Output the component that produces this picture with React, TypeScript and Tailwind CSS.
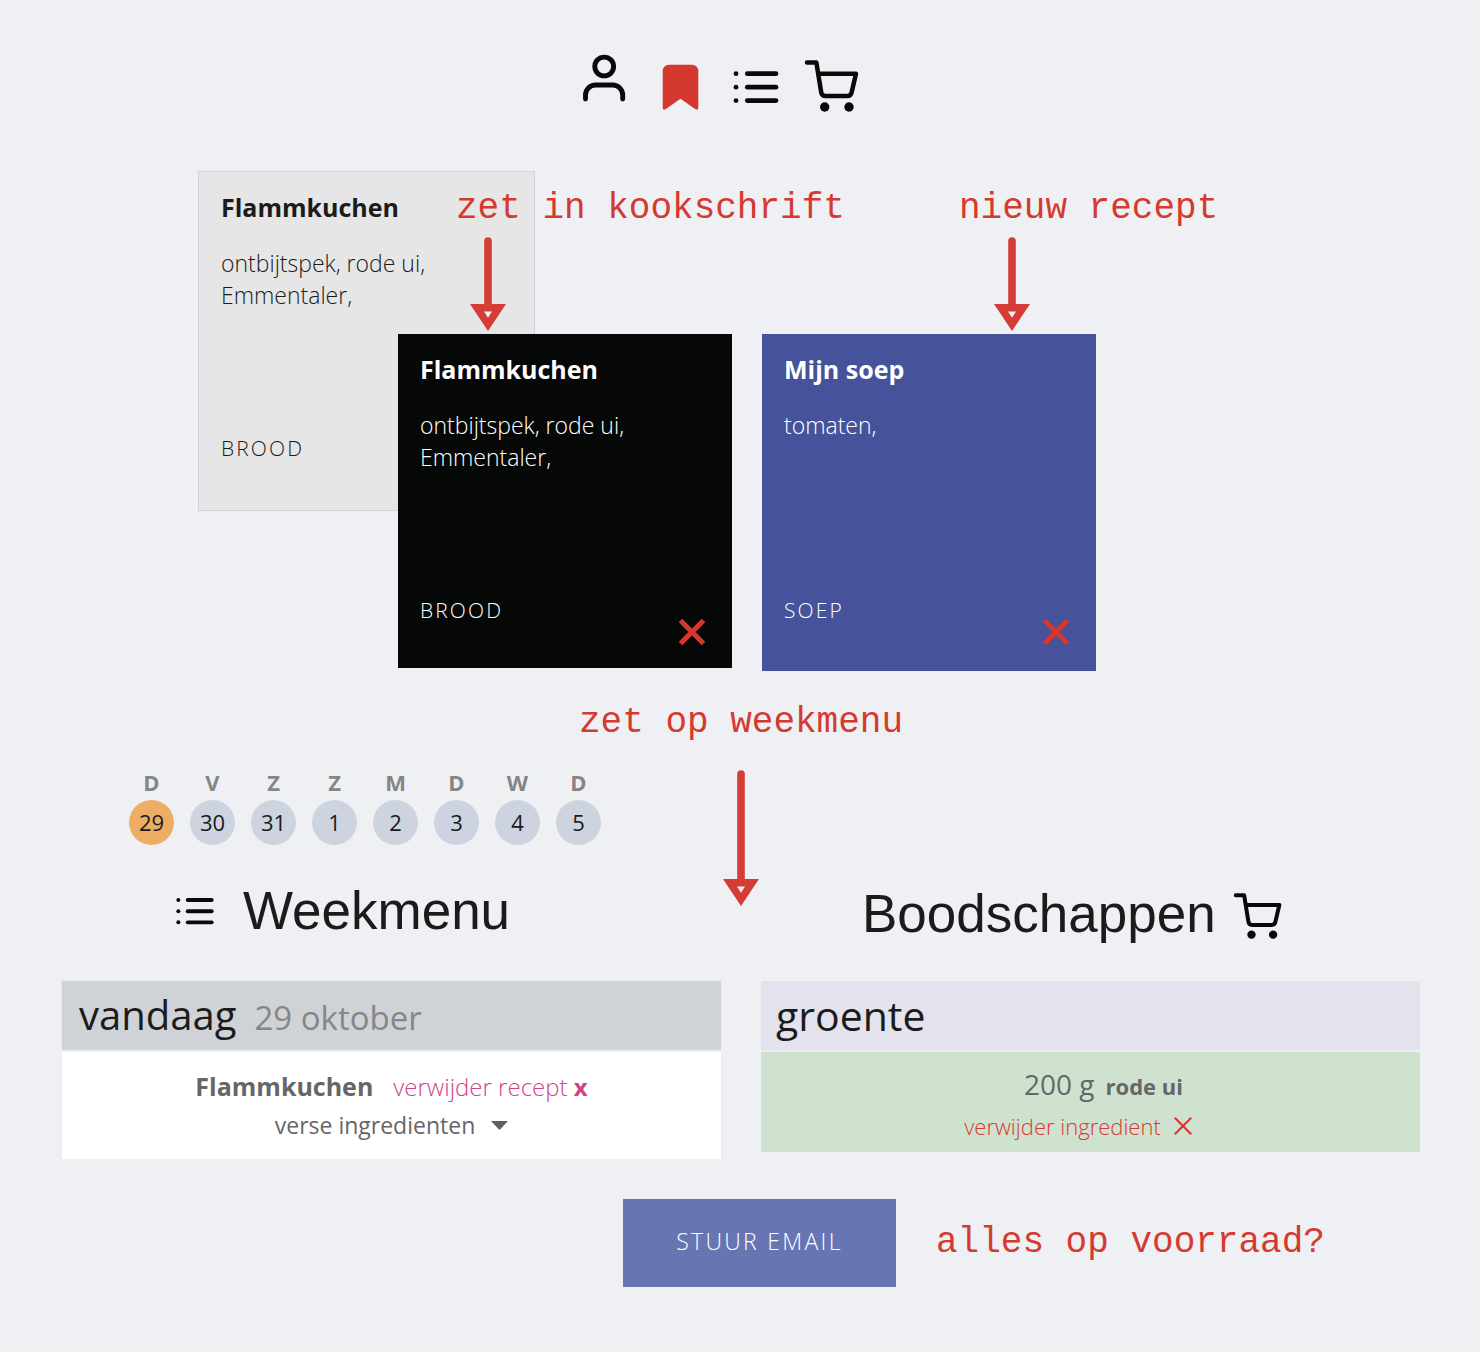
import React from "react";

const LIGHT = "#f0f0f4";

function UserIcon() {
  return (
    <svg viewBox="0 0 56 64" className="h-16 w-14" fill="none" stroke="#080a09" strokeWidth="4.9" strokeLinecap="round" aria-hidden="true">
      <circle cx="28.2" cy="12.5" r="9.4" />
      <path d="M9.5 45V41a10 10 0 0 1 10-10h17.2a10 10 0 0 1 10 10v4" />
    </svg>
  );
}

function BookmarkIcon() {
  return (
    <svg viewBox="0 0 56 64" className="h-16 w-14" fill="#d4382f" aria-hidden="true">
      <path d="M17 10.7h23a6.3 6.3 0 0 1 6.3 6.3v36.6q0 3-2.8 1.6L28.5 44.7 13.5 55.2q-2.8 1.4-2.8-1.6V17a6.3 6.3 0 0 1 6.3-6.3Z" />
    </svg>
  );
}

function ListIcon({ className }: { className: string }) {
  return (
    <svg viewBox="4 15 48 36" className={className} fill="none" stroke="#080a09" strokeWidth="4.7" strokeLinecap="round" aria-hidden="true">
      {[19.7, 33.2, 46.6].map((y) => (
        <React.Fragment key={y}>
          <path d={`M19.3 ${y}H48`} />
          <circle cx="8" cy={y} r="2.4" fill="#080a09" stroke="none" />
        </React.Fragment>
      ))}
    </svg>
  );
}

function CartIcon({ className }: { className: string }) {
  return (
    <svg viewBox="0 5 56 54" className={className} fill="none" stroke="#080a09" strokeWidth="4.5" strokeLinecap="round" strokeLinejoin="round" aria-hidden="true">
      <path d="M3 8.6h9.4l4.8 29.8q.6 3.6 4.2 3.6h22q3.6 0 4.2-3.6L52 19.7H14.5" />
      <circle cx="20.7" cy="53" r="4.7" fill="#080a09" stroke="none" />
      <circle cx="45" cy="53" r="4.7" fill="#080a09" stroke="none" />
    </svg>
  );
}

function Arrow({ length, className = "" }: { length: number; className?: string }) {
  return (
    <svg width="36" height={length} viewBox={`0 0 36 ${length}`} className={className} aria-hidden="true">
      <path d={`M18 4V${length - 24}`} stroke="#d43c35" strokeWidth="7.6" strokeLinecap="round" />
      <path d={`M0 ${length - 27}H36L18 ${length}Z`} fill="#d43c35" />
      <path d={`M14 ${length - 19.5}h8l-4 6.2Z`} fill={LIGHT} />
    </svg>
  );
}

function Cross({ className, width }: { className: string; width: number }) {
  return (
    <svg viewBox="0 0 28 28" className={className} stroke="#d8372c" strokeWidth={width} aria-hidden="true">
      <path d="M2.5 2.5l23 23M25.5 2.5l-23 23" />
    </svg>
  );
}

type CardProps = { title: string; items: string[]; kind: string; className: string; removable?: boolean };

function RecipeCard({ title, items, kind, className, removable }: CardProps) {
  return (
    <article className={`flex flex-col px-[22px] pt-[19px] ${className}`}>
      <h2 className="text-[25px] leading-8 font-bold">{title}</h2>
      <p className="mt-6 text-[23px] leading-8 font-light">
        {items.map((line) => (
          <span key={line} className="block">{line}</span>
        ))}
      </p>
      <div className="mt-auto flex items-end justify-between">
        <span className="pb-5 text-[21px] leading-8 font-light tracking-widest">{kind}</span>
        {removable && (
          <button type="button" aria-label={`Verwijder ${title}`} className="mr-1">
            <Cross className="size-7" width={5} />
          </button>
        )}
      </div>
    </article>
  );
}

function Note({ children, className = "" }: { children: string; className?: string }) {
  return (
    <p className={`font-['Liberation_Mono',monospace] text-[36px] leading-10 whitespace-nowrap text-[#d43a30] ${className}`}>
      {children}
    </p>
  );
}

const days: [string, number][] = [
  ["D", 29], ["V", 30], ["Z", 31], ["Z", 1], ["M", 2], ["D", 3], ["W", 4], ["D", 5],
];

export default function App() {
  return (
    <main className="min-h-screen overflow-x-hidden bg-[#eff0f4] pt-[54px] pr-[60px] pb-16 pl-[62px] font-['Open_Sans',sans-serif] text-[#1b1b1b]">
      <nav aria-label="Hoofdmenu" className="flex justify-center pr-[46px]">
        <a href="#profiel" aria-label="Profiel" className="flex w-[76px] justify-center"><UserIcon /></a>
        <a href="#kookschrift" aria-label="Kookschrift" className="flex w-[76px] justify-center"><BookmarkIcon /></a>
        <a href="#weekmenu" aria-label="Weekmenu" className="flex w-[76px] justify-center pt-[15px]"><ListIcon className="h-9 w-12" /></a>
        <a href="#boodschappen" aria-label="Boodschappen" className="flex w-[76px] justify-center pt-[5px]"><CartIcon className="h-[54px] w-14" /></a>
      </nav>

      <section aria-label="Recepten" className="mt-[53px] grid pl-[136px]">
        <RecipeCard
          title="Flammkuchen"
          items={["ontbijtspek, rode ui,", "Emmentaler,"]}
          kind="BROOD"
          className="col-start-1 row-start-1 h-[340px] w-[337px] border border-[#ced3e0] bg-[#e6e6e6] pb-[26px]"
        />
        <div className="z-10 col-start-1 row-start-1 flex items-start gap-[30px] pt-[18px] pl-[200px]">
          <div className="w-[334px]">
            <Note className="pl-[58px]">zet in kookschrift</Note>
            <Arrow length={94} className="mt-2 mb-[3px] ml-[72px]" />
            <RecipeCard
              title="Flammkuchen"
              items={["ontbijtspek, rode ui,", "Emmentaler,"]}
              kind="BROOD"
              removable
              className="h-[334px] bg-[#060807] pb-[22px] text-white"
            />
          </div>
          <div className="w-[334px]">
            <Note className="pl-[197px]">nieuw recept</Note>
            <Arrow length={94} className="mt-2 mb-[3px] ml-[232px]" />
            <RecipeCard
              title="Mijn soep"
              items={["tomaten,"]}
              kind="SOEP"
              removable
              className="h-[337px] bg-[#46539b] pb-[25px] text-white"
            />
          </div>
        </div>
      </section>

      <Note className="mt-8 text-center">zet op weekmenu</Note>

      <div className="mt-[27px] grid grid-cols-[1fr_40px_1fr]">
        <div className="pb-[3px]">
          <ol className="flex gap-4 pl-[67px]">
            {days.map(([day, date], i) => (
              <li key={date} className="flex w-[45px] flex-col items-center">
                <span className="mb-[6px] text-[22px] leading-6 font-bold text-[#858585]">{day}</span>
                <button
                  type="button"
                  className={`flex size-[45px] items-center justify-center rounded-full text-[22px] ${i === 0 ? "bg-[#ebae64]" : "bg-[#cdd4df]"}`}
                >
                  {date}
                </button>
              </li>
            ))}
          </ol>
          <h1 className="mt-[34px] flex items-center gap-7 pl-[113px] font-['Liberation_Sans',sans-serif] text-[53px] leading-[64px]">
            <ListIcon className="h-[30px] w-10" />
            Weekmenu
          </h1>
        </div>
        <Arrow length={136} className="justify-self-center" />
        <h1 className="flex items-center gap-[17px] self-end pl-[101px] font-['Liberation_Sans',sans-serif] text-[53px] leading-[64px]">
          Boodschappen
          <CartIcon className="mt-1 h-[48px] w-[50px]" />
        </h1>
      </div>

      <div className="mt-[35px] grid grid-cols-2 items-start gap-10">
        <section aria-label="Weekmenu" className="bg-white shadow-[0_0_0_2px_#eeedef]">
          <header className="flex h-[71px] items-baseline gap-[18px] border-b-2 border-[#eeedef] bg-[#cfd2d7] px-[17px] pt-2">
            <h2 className="text-[40px] leading-[52px] font-medium">vandaag</h2>
            <span className="text-[33px] text-[#868686]">29 oktober</span>
          </header>
          <div className="flex flex-col items-center pt-4 pb-4 text-[#666666]">
            <div className="flex items-baseline gap-5">
              <span className="text-[25px] leading-9 font-bold">Flammkuchen</span>
              <button type="button" className="text-[24px] leading-9 font-light text-[#cf4389]">
                verwijder recept <b className="font-bold">x</b>
              </button>
            </div>
            <button type="button" className="mt-[2px] flex items-center gap-4 text-[23px] leading-9">
              verse ingredienten
              <svg viewBox="0 0 17 9" className="h-[9px] w-[17px]" fill="#5f5f5f" aria-hidden="true"><path d="M0 0h17L8.5 9Z" /></svg>
            </button>
          </div>
        </section>

        <section aria-label="Boodschappen" className="bg-[#cfe2cf]">
          <header className="h-[71px] border-b-2 border-[#eeedef] bg-[#e4e3ed] px-[15px] pt-2">
            <h2 className="text-[41px] leading-[52px] font-medium">groente</h2>
          </header>
          <div className="flex flex-col items-center pt-[14px] pb-2 text-[#666666]">
            <div className="flex items-baseline gap-[11px] pl-[26px]">
              <span className="text-[28px] leading-9">200 g</span>
              <b className="text-[22px]">rode ui</b>
            </div>
            <button type="button" className="mt-[5px] flex items-center gap-3 pr-6 text-[22px] leading-9 font-light text-[#d83a2d]">
              verwijder ingredient
              <Cross className="size-5" width={3} />
            </button>
          </div>
        </section>
      </div>

      <div className="mt-10 flex items-center gap-10 pl-[561px]">
        <button type="button" className="h-[88px] w-[273px] bg-[#6875b3] pb-1 text-[23px] font-light tracking-widest text-white">
          STUUR EMAIL
        </button>
        <Note>alles op voorraad?</Note>
      </div>
    </main>
  );
}
